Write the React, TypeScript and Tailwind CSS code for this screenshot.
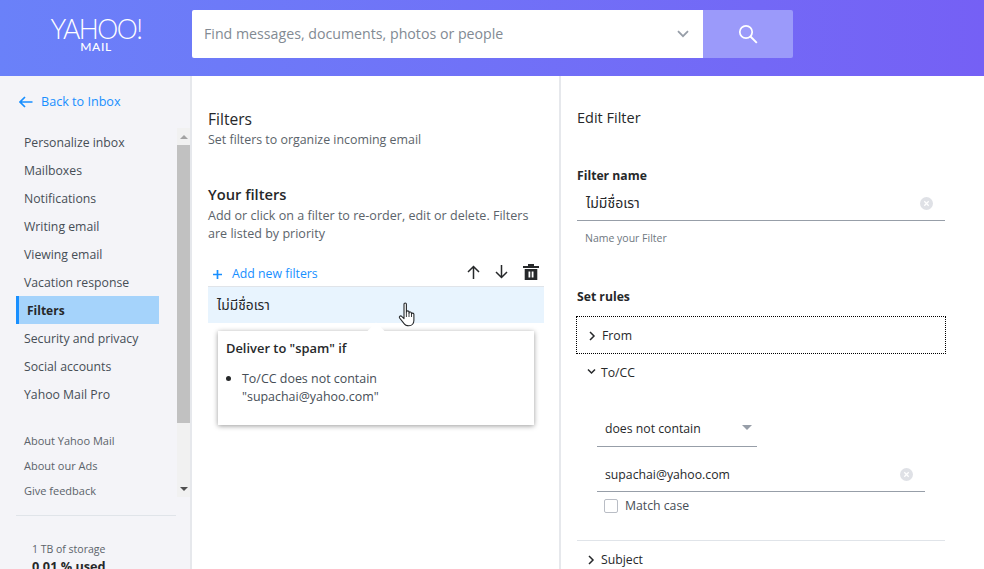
import React from "react";

const nav = ["Personalize inbox", "Mailboxes", "Notifications", "Writing email", "Viewing email", "Vacation response", "Filters", "Security and privacy", "Social accounts", "Yahoo Mail Pro"];

function ClearIcon() {
  return (
    <svg width="13" height="13" viewBox="0 0 13 13" className="shrink-0">
      <circle cx="6.5" cy="6.5" r="6.5" fill="#dfe1e6" />
      <path d="M4.3 4.3l4.4 4.4M8.7 4.3l-4.4 4.4" stroke="#fff" strokeWidth="1.3" />
    </svg>
  );
}

function ChevronRight() {
  return (
    <svg width="8" height="10" viewBox="0 0 8 10" className="shrink-0">
      <path d="M2 1l4 4-4 4" fill="none" stroke="#26282a" strokeWidth="1.5" />
    </svg>
  );
}

function Hand() {
  return (
    <svg width="20" height="26" viewBox="0 0 20 26" className="absolute left-[398px] top-[302px]">
      <path
        d="M6 2.2c0-1.6 2.4-1.6 2.4 0V10c.1-1.6 2.5-1.5 2.6 0v1c.1-1.5 2.4-1.4 2.5.1v.9c.2-1.3 2.3-1.2 2.4.2v6c0 3.2-2 5.6-5 5.6-2.6 0-4-.8-5.2-2.6L1.6 16c-.9-1.4.9-2.8 2.1-1.6L6 16.6V2.2z"
        fill="#fff"
        stroke="#26282a"
        strokeWidth="1.1"
        strokeLinejoin="round"
      />
      <path d="M8.4 10v5M11 11v4M13.5 12v3" stroke="#26282a" strokeWidth="0.9" fill="none" />
    </svg>
  );
}

export default function App() {
  return (
    <div className="relative h-[569px] w-[984px] overflow-hidden bg-white font-['Open_Sans','Noto_Sans_Thai','Noto_Sans',sans-serif] text-[#26282a]">
      <header className="flex h-[76px] items-start bg-gradient-to-r from-[#6a81f9] to-[#7560f5] pt-[10px]">
        <div className="flex h-[48px] w-[192px] flex-col items-center pt-[8px] text-white">
          <span className="font-['Lato',sans-serif] text-[26.5px] leading-[22px] font-light tracking-[-1.5px]">YAHOO!</span>
          <span className="mt-[1px] font-['Lato',sans-serif] text-[12px] leading-[11px] font-medium tracking-[0.6px]">MAIL</span>
        </div>
        <div className="flex h-[48px] w-[511px] items-center justify-between rounded-l-[2px] bg-white pr-[14px] pl-[12px]">
          <span className="text-[14.2px] text-[#828a93]">Find messages, documents, photos or people</span>
          <svg width="12" height="8" viewBox="0 0 12 8"><path d="M1 1.2l5 5 5-5" fill="none" stroke="#979ea8" strokeWidth="1.8" /></svg>
        </div>
        <div className="flex h-[48px] w-[90px] items-center justify-center rounded-r-[2px] bg-[#9b9afa]">
          <svg width="20" height="20" viewBox="0 0 20 20" className="mt-[-1px]">
            <circle cx="8" cy="8" r="6.2" fill="none" stroke="#fff" strokeWidth="1.7" />
            <path d="M12.5 12.5l6.3 6.3" stroke="#fff" strokeWidth="1.9" />
          </svg>
        </div>
      </header>

      <div className="flex h-[493px]">
        <aside className="flex h-full w-[192px] shrink-0 flex-col border-r-2 border-[#e6e8ec] bg-[#f4f4f8]">
          <div className="flex h-[52px] shrink-0 items-center gap-[8px] pl-[19px] text-[12.6px] font-normal text-[#188fff]">
            <svg width="14" height="12" viewBox="0 0 14 12"><path d="M13.5 6H1.2M6 1L1 6l5 5" fill="none" stroke="#188fff" strokeWidth="1.7" /></svg>
            <span className="mt-[1px]">Back to Inbox</span>
          </div>
          <div className="flex h-[369px] shrink-0 overflow-hidden">
            <div className="w-[177px] shrink-0 pl-[16px]">
              <ul className="mb-[21px]">
                {nav.map((n) => (
                  <li
                    key={n}
                    className={
                      n === "Filters"
                        ? "flex h-[28px] w-[143px] items-center border-l-[3px] border-[#188fff] bg-[#a5d3fb] pt-[1px] pl-[8px] text-[12px] font-bold"
                        : "flex h-[28px] items-center pt-[2px] pl-[8px] text-[12.25px] text-[#464e56]"
                    }
                  >
                    {n}
                  </li>
                ))}
              </ul>
              <ul>
                {["About Yahoo Mail", "About our Ads", "Give feedback"].map((n) => (
                  <li key={n} className="flex h-[25px] items-center pl-[8px] text-[11px] text-[#5b636a]">{n}</li>
                ))}
              </ul>
            </div>
            <div className="flex w-[13px] flex-col items-center bg-[#f1f1f1]">
              <div className="flex h-[17px] w-full items-center justify-center">
                <div className="h-0 w-0 border-x-[4px] border-b-[4px] border-x-transparent border-b-[#a3a3a3]" />
              </div>
              <div className="h-[278px] w-full bg-[#c1c1c1]" />
              <div className="flex flex-1 items-end justify-center pb-[6px]">
                <div className="h-0 w-0 border-x-[4px] border-t-[4px] border-x-transparent border-t-[#505050]" />
              </div>
            </div>
          </div>
          <div className="mt-[18px] ml-[16px] w-[160px] shrink-0 border-t border-[#e0e4e9] pt-[25px] pl-[16px]">
            <div className="text-[10.5px] leading-[16px] text-[#5b636a]">1 TB of storage</div>
            <div className="text-[12.7px] leading-[18px] font-bold text-[#26282a]">0.01 % used</div>
          </div>
        </aside>

        <main className="relative h-full w-[369px] shrink-0 border-r-2 border-[#e6e8ec] px-[16px]">
          <h1 className="mt-[32px] text-[15.6px] leading-[22px] font-normal">Filters</h1>
          <p className="mt-[1px] text-[12.4px] leading-[18px] text-[#5b636a]">Set filters to organize incoming email</p>
          <h2 className="mt-[35px] text-[14.7px] leading-[20px] font-semibold">Your filters</h2>
          <p className="mt-[3px] w-[336px] text-[12.55px] leading-[18px] text-[#5b636a]">Add or click on a filter to re-order, edit or delete. Filters are listed by priority</p>
          <div className="mt-[12px] flex h-[32px] w-[336px] items-center justify-between border-b border-[#e0e4e9] px-[5px] pt-[3px]">
            <div className="mt-[4px] flex items-center gap-[10px] text-[12.3px] text-[#188fff]">
              <svg width="9" height="9" viewBox="0 0 9 9"><path d="M4.5 0v9M0 4.5h9" stroke="#188fff" strokeWidth="1.7" /></svg>
              <span>Add new filters</span>
            </div>
            <div className="flex items-center gap-[15px]">
              <svg width="13" height="14" viewBox="0 0 13 14"><path d="M6.5 14V1.5M1 7l5.5-5.5L12 7" fill="none" stroke="#26282a" strokeWidth="1.5" /></svg>
              <svg width="13" height="14" viewBox="0 0 13 14"><path d="M6.5 0v12.5M1 7l5.5 5.5L12 7" fill="none" stroke="#26282a" strokeWidth="1.5" /></svg>
              <svg width="16" height="16" viewBox="0 0 16 16"><path fillRule="evenodd" d="M0 2h5V0h6v2h5v2H0zM1.700 5h12.600v11H1.700zM5.500 7.500v6h1.800v-6zM8.700 7.500v6h1.800v-6z" fill="#26282a" /></svg>
            </div>
          </div>
          <div className="flex h-[36px] w-[336px] items-center bg-[#e8f4fe] pl-[9px] text-[13.8px]">ไม่มีชื่อเรา</div>
          <div className="relative mt-[8px] ml-[10px] h-[94px] w-[316px] bg-white px-[8px] pt-[8px] shadow-[0_1px_5px_rgba(0,0,0,0.4)]">
            <div className="absolute top-[-6px] left-[152px] h-[12px] w-[12px] rotate-45 bg-white" />
            <div className="relative text-[12.9px] leading-[18px] font-semibold">Deliver to "spam" if</div>
            <div className="mt-[13px] flex text-[12.45px] leading-[18px] text-[#464e56]">
              <span className="mt-[6px] mr-[11px] h-[5px] w-[5px] shrink-0 rounded-full bg-[#26282a]" />
              <span>To/CC does not contain<br />"supachai@yahoo.com"</span>
            </div>
          </div>
        </main>

        <section className="h-full flex-1 pl-[16px]">
          <h1 className="mt-[31px] text-[14.5px] leading-[22px] font-normal">Edit Filter</h1>
          <div className="mt-[38px] text-[12.2px] leading-[18px] font-bold">Filter name</div>
          <div className="mt-[1px] flex h-[35px] w-[368px] items-center justify-between border-b border-[#979ea8] pr-[12px] pl-[9px]">
            <span className="mb-[2px] text-[14px]">ไม่มีชื่อเรา</span>
            <ClearIcon />
          </div>
          <div className="mt-[10px] pl-[8px] text-[10.5px] leading-[14px] text-[#6e7780]">Name your Filter</div>
          <div className="mt-[43px] text-[12.2px] leading-[18px] font-bold">Set rules</div>
          <div className="mt-[10px] flex h-[38px] w-[370px] -translate-x-[1px] items-center gap-[6px] border border-dotted border-[#000] pt-[2px] pl-[11px] text-[12.25px] font-normal">
            <ChevronRight />
            <span>From</span>
          </div>
          <div className="flex h-[36px] items-center gap-[5px] pt-[2px] pl-[10px] text-[12.25px]">
            <svg width="9" height="8" viewBox="0 0 9 8" className="mb-[2px]"><path d="M1 1.500l3.500 3.500L8 1.500" fill="none" stroke="#26282a" strokeWidth="1.500" /></svg>
            <span>To/CC</span>
          </div>
          <div className="pl-[20px]">
            <div className="mt-[20px] flex h-[37px] w-[160px] items-center justify-between border-b border-[#979ea8] pt-[2px] pr-[5px] pl-[8px] text-[12.25px]">
              <span>does not contain</span>
              <div className="mb-[4px] h-0 w-0 border-x-[5px] border-t-[5px] border-x-transparent border-t-[#979ea8]" />
            </div>
            <div className="mt-[10px] flex h-[35px] w-[328px] items-center justify-between border-b border-[#979ea8] pr-[12px] pl-[8px] text-[12.25px]">
              <span className="mt-[2px]">supachai@yahoo.com</span>
              <ClearIcon />
            </div>
            <div className="mt-[5px] flex h-[18px] items-center gap-[7px] pl-[7px] text-[12.25px] text-[#464e56]">
              <span className="h-[14px] w-[14px] rounded-[2px] border border-[#b9bdc5] bg-white" />
              <span>Match case</span>
            </div>
          </div>
          <div className="mt-[25px] w-[368px] border-t border-[#e0e4e9]" />
          <div className="flex h-[36px] items-center gap-[6px] pt-[2px] pl-[10px] text-[12.25px]">
            <ChevronRight />
            <span>Subject</span>
          </div>
        </section>
      </div>
      <Hand />
    </div>
  );
}
